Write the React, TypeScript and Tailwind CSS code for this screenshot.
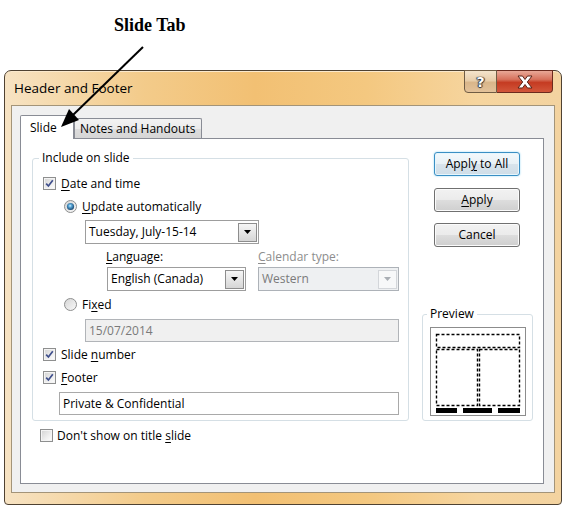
import React from "react";

const U = ({ c }: { c: string }) => (
  <span className="underline underline-offset-[2px] decoration-[1px]">{c}</span>
);

function Check({ checked }: { checked?: boolean }) {
  return (
    <span className="w-[13px] h-[13px] shrink-0 border border-[#8e8f8f] bg-[#f4f4f4] p-[1px] flex">
      <span className="flex-1 bg-[linear-gradient(135deg,#d6d6d6_0%,#eeeeee_60%,#fbfbfb_100%)] flex items-center justify-center">
        {checked && (
          <svg width="9" height="9" viewBox="0 0 9 9">
            <path d="M1.2 4.6 L3.4 7 L7.8 1.2" fill="none" stroke="#3f4f8c" strokeWidth="1.7" />
          </svg>
        )}
      </span>
    </span>
  );
}

function Radio({ checked }: { checked?: boolean }) {
  return (
    <svg width="13" height="13" viewBox="0 0 13 13" className="shrink-0">
      <defs>
        <linearGradient id="rbg" x1="0" y1="0" x2="1" y2="1">
          <stop offset="0" stopColor="#d4d4d4" />
          <stop offset="1" stopColor="#fafafa" />
        </linearGradient>
        <radialGradient id="rdot" cx="0.45" cy="0.4" r="0.6">
          <stop offset="0" stopColor="#d6f0ff" />
          <stop offset="0.35" stopColor="#5aa8d8" />
          <stop offset="1" stopColor="#17436c" />
        </radialGradient>
      </defs>
      <circle cx="6.5" cy="6.5" r="6" fill="url(#rbg)" stroke="#8e8f8f" strokeWidth="1" />
      {checked && <circle cx="6.5" cy="6.5" r="3.6" fill="url(#rdot)" />}
    </svg>
  );
}

function DropBtn({ disabled }: { disabled?: boolean }) {
  return disabled ? (
    <span className="w-[19px] h-[19px] border border-[#d3d6da] bg-[#f7f8f9] flex items-center justify-center">
      <svg width="7" height="4" viewBox="0 0 7 4">
        <path d="M0 0 H7 L3.5 4 Z" fill="#a9aeb4" />
      </svg>
    </span>
  ) : (
    <span className="w-[19px] h-[19px] border border-[#8d8d8d] bg-[linear-gradient(180deg,#f6f6f6_0%,#e6e6e6_50%,#d6d6d6_100%)] flex items-center justify-center">
      <svg width="7" height="4" viewBox="0 0 7 4">
        <path d="M0 0 H7 L3.5 4 Z" fill="#000" />
      </svg>
    </span>
  );
}

function Btn({ children, primary }: { children: React.ReactNode; primary?: boolean }) {
  return primary ? (
    <div className="w-[86px] h-[24px] rounded-[3px] border border-[#3a8fc4] shadow-[0_0_2px_#8fd3f3,inset_0_0_0_1px_#e6f6fd] bg-[linear-gradient(180deg,#f3f9fc_0%,#e8f1f6_50%,#d8e4ec_51%,#cfdde7_100%)] flex items-center justify-center">
      {children}
    </div>
  ) : (
    <div className="w-[86px] h-[24px] rounded-[3px] border border-[#707070] shadow-[inset_0_0_0_1px_#fbfbfb] bg-[linear-gradient(180deg,#f2f2f2_0%,#ebebeb_50%,#dddddd_51%,#cfcfcf_100%)] flex items-center justify-center">
      {children}
    </div>
  );
}

export default function App() {
  return (
    <div className="relative w-[565px] h-[507px] overflow-hidden bg-white font-['Open_Sans',sans-serif] text-[12px] leading-[16px] text-black">
      <div className="h-[70px] pl-[114px] pt-[16px]">
        <span className="font-['Liberation_Serif',serif] font-bold text-[18px] leading-[18px]">Slide Tab</span>
      </div>

      <div className="ml-[4px] w-[558px] h-[435px] flex flex-col rounded-t-[7px] rounded-b-[4px] border border-[#4f4232] bg-[linear-gradient(90deg,#f7e3c3_0%,#f3cb8a_25%,#f2c073_45%,#f4c880_65%,#f6d59f_85%,#f3d3a0_100%)] shadow-[inset_0_1px_0_#fbe9cc]">
        <div className="h-[34px] flex items-start justify-between">
          <div className="h-full flex items-center pl-[9px] pb-[1px] text-[13.5px]">Header and Footer</div>
          <div className="flex mr-[8px] -mt-px">
            <div className="w-[33px] h-[23px] rounded-bl-[4px] border border-[#6f5c44] bg-[linear-gradient(180deg,#f4e4cc_0%,#e8ceaa_45%,#d9b68a_55%,#e3c29a_100%)] flex items-center justify-center">
              <span className="font-['DejaVu_Sans',sans-serif] font-bold text-[14px] leading-[14px] text-white [text-shadow:0_0_1px_#333,1px_0_1px_#333,-1px_0_1px_#333,0_1px_1px_#333]">?</span>
            </div>
            <div className="w-[56px] h-[23px] rounded-br-[4px] border-y border-r border-[#6b2a1e] bg-[linear-gradient(180deg,#e9a897_0%,#d7725c_40%,#c53b22_55%,#d2563a_100%)] flex items-center justify-center">
              <svg width="18" height="14" viewBox="0 0 18 14">
                <path
                  d="M2 1 H6.5 L9 4.5 L11.5 1 H16 L11.3 7 L16 13 H11.5 L9 9.5 L6.5 13 H2 L6.7 7 Z"
                  fill="#fff"
                  stroke="#5a2418"
                  strokeWidth="1"
                  strokeLinejoin="round"
                />
              </svg>
            </div>
          </div>
        </div>

        <div className="mx-[6px] h-[388px] border border-[#a39479] bg-[#f0f0f0] pt-[9px] pl-[8px]">
          <div className="h-[23px] flex items-end">
            <div className="relative z-10 -mb-px w-[54px] h-[24px] border-l border-t border-r border-[#898c95] rounded-t-[2px] bg-white flex items-center pl-[9px]">
              Slide
            </div>
            <div className="w-[128px] h-[20px] border-l border-t border-r border-[#898c95] rounded-t-[2px] bg-[linear-gradient(180deg,#f3f3f3_0%,#ebebeb_50%,#dddddd_51%,#d6d6d6_100%)] flex items-center pl-[5px]">
              Notes and Handouts
            </div>
          </div>

          <div className="w-[524px] h-[346px] border border-[#898c95] bg-white pl-[11px] pt-[11px]">
            <div className="flex">
              <fieldset className="w-[377px] border border-[#d5dfe5] rounded-[3px] pb-[5px]">
                <legend className="ml-[6px] px-[3px] h-[16px] leading-[16px]">Include on slide</legend>
                <div className="pt-[6px] flex flex-col">
                  <div className="h-[23px] flex items-center gap-[5px] pl-[10px]">
                    <Check checked />
                    <span>
                      <U c="D" />ate and time
                    </span>
                  </div>
                  <div className="h-[23px] flex items-center gap-[5px] pl-[31px]">
                    <Radio checked />
                    <span>
                      <U c="U" />pdate automatically
                    </span>
                  </div>
                  <div className="mt-[2px] ml-[52px] w-[174px] h-[24px] border border-[#9d9d9d] bg-white flex items-center pl-[3px] pr-[1px]">
                    <span className="flex-1">Tuesday, July-15-14</span>
                    <DropBtn />
                  </div>
                  <div className="mt-[3px] ml-[74px] flex gap-[12px]">
                    <div className="w-[139px] flex flex-col">
                      <div className="h-[20px] flex items-center -ml-px">
                        <span>
                          <U c="L" />anguage:
                        </span>
                      </div>
                      <div className="h-[24px] border border-[#9d9d9d] bg-white flex items-center pl-[3px] pr-[1px]">
                        <span className="flex-1">English (Canada)</span>
                        <DropBtn />
                      </div>
                    </div>
                    <div className="w-[141px] flex flex-col">
                      <div className="h-[20px] flex items-center text-[#8d8d8d]">
                        <span>
                          <U c="C" />alendar type:
                        </span>
                      </div>
                      <div className="h-[24px] border border-[#adb2b8] bg-[#eef0f2] flex items-center pl-[3px] pr-[1px] text-[#7a7a7a]">
                        <span className="flex-1">Western</span>
                        <DropBtn disabled />
                      </div>
                    </div>
                  </div>
                  <div className="h-[27px] flex items-center gap-[5px] pl-[31px]">
                    <Radio />
                    <span>
                      Fi<U c="x" />ed
                    </span>
                  </div>
                  <div className="mt-[1px] ml-[52px] w-[314px] h-[23px] border border-[#b1b4b8] bg-[#f0f0f0] flex items-center pl-[3px] text-[#7a7a7a]">
                    15/07/2014
                  </div>
                  <div className="h-[25px] flex items-center gap-[5px] pl-[10px]">
                    <Check checked />
                    <span>
                      Slide <U c="n" />umber
                    </span>
                  </div>
                  <div className="h-[21px] flex items-center gap-[5px] pl-[10px]">
                    <Check checked />
                    <span>
                      <U c="F" />ooter
                    </span>
                  </div>
                  <div className="mt-[4px] ml-[26px] w-[340px] h-[23px] border border-[#a9a9a9] bg-white flex items-center pl-[3px]">
                    Private &amp; Confidential
                  </div>
                </div>
              </fieldset>

              <div className="ml-[13px] w-[111px] flex flex-col">
                <div className="ml-[12px] mt-[2px]">
                  <Btn primary>
                    <span>
                      Appl<U c="y" /> to All
                    </span>
                  </Btn>
                </div>
                <div className="ml-[12px] mt-[12px]">
                  <Btn>
                    <span>
                      <U c="A" />pply
                    </span>
                  </Btn>
                </div>
                <div className="ml-[12px] mt-[11px]">
                  <Btn>Cancel</Btn>
                </div>
                <fieldset className="mt-auto border border-[#d5dfe5] rounded-[3px] pt-[5px] pb-[4px]">
                  <legend className="ml-[4px] px-[3px] h-[16px] leading-[16px]">Preview</legend>
                  <div className="ml-[7px] w-[96px] h-[89px] border border-[#8c8c8c] bg-white">
                    <svg width="94" height="87" viewBox="1 1 94 87">
                      <g fill="none" stroke="#000" strokeWidth="1.4" strokeDasharray="3 2">
                        <rect x="6.5" y="7.5" width="83" height="13" />
                        <rect x="6.5" y="22.5" width="41" height="56" />
                        <rect x="49.5" y="22.5" width="40" height="56" />
                      </g>
                      <g fill="#000">
                        <rect x="6" y="81" width="21" height="5" />
                        <rect x="33" y="81" width="29" height="5" />
                        <rect x="68" y="81" width="22" height="5" />
                      </g>
                    </svg>
                  </div>
                </fieldset>
              </div>
            </div>

            <div className="mt-[3px] h-[23px] flex items-center gap-[4px] pl-[8px]">
              <Check />
              <span>
                Don't show on title <U c="s" />lide
              </span>
            </div>
          </div>
        </div>
      </div>

      <svg className="absolute inset-0 z-20 pointer-events-none" width="565" height="507" viewBox="0 0 565 507">
        <line x1="143" y1="47" x2="73" y2="115" stroke="#000" strokeWidth="2" />
        <path d="M61 127 L79 120 L69 109 Z" fill="#000" />
      </svg>
    </div>
  );
}
